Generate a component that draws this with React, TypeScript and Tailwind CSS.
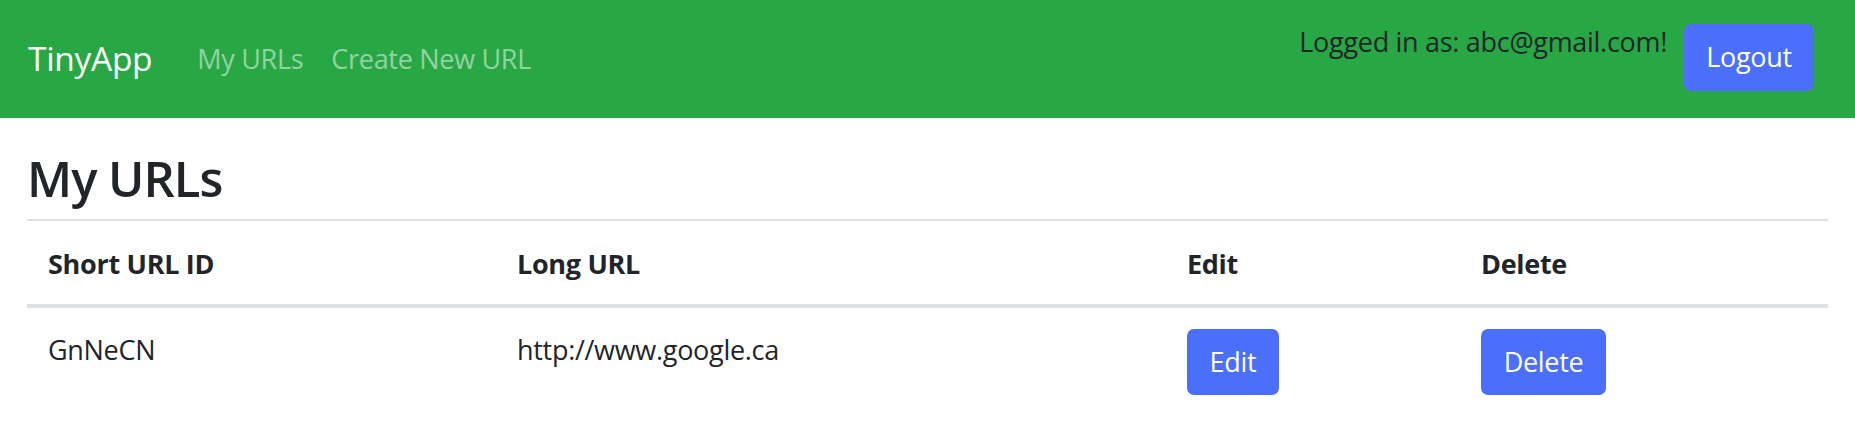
import React from "react";

const urls = [{ id: "GnNeCN", longURL: "http://www.google.ca" }];

const Navbar = () => (
  <nav className="flex h-[118px] items-stretch justify-between bg-[#28a745] pl-[28px] pr-[41px]">
    <div className="flex items-center">
      <a href="#" className="mr-[31px] -mt-[2px] text-[33.5px] leading-[1.5] tracking-[-0.3px] text-white">
        TinyApp
      </a>
      <a href="#" className="px-[14px] text-[27px] leading-[1.5] text-white/50">
        My URLs
      </a>
      <a href="#" className="px-[14px] text-[27px] leading-[1.5] text-white/50">
        Create New URL
      </a>
    </div>
    <div className="flex items-start gap-[17px] pt-[24px]">
      <span className="-mt-[2px] text-[27px] leading-[1.5] text-[#212529]">
        Logged in as: abc@gmail.com!
      </span>
      <button className="h-[67px] w-[130px] rounded-[7px] bg-[#4a6ffb] text-[27px] leading-[1.5] text-white">
        Logout
      </button>
    </div>
  </nav>
);

export default function App() {
  return (
    <div className="min-h-screen bg-white font-['Open_Sans',sans-serif] tracking-[-0.3px] text-[#212529]">
      <Navbar />
      <main className="px-[27px]">
        <h2 className="mt-[31px] mb-[11px] text-[49px] leading-[1.2] font-semibold tracking-[-1px]">My URLs</h2>
        <table className="w-full table-fixed border-collapse text-left text-[27px] leading-[1.5]">
          <colgroup>
            <col className="w-[469px]" />
            <col className="w-[670px]" />
            <col className="w-[294px]" />
            <col className="w-[368px]" />
          </colgroup>
          <thead>
            <tr className="border-t-2 border-b-4 border-[#dee2e6]">
              <th className="px-[21px] pt-[23px] pb-[20px] font-bold">Short URL ID</th>
              <th className="px-[21px] pt-[23px] pb-[20px] font-bold">Long URL</th>
              <th className="px-[21px] pt-[23px] pb-[20px] font-bold">Edit</th>
              <th className="px-[21px] pt-[23px] pb-[20px] font-bold">Delete</th>
            </tr>
          </thead>
          <tbody>
            {urls.map((url) => (
              <tr key={url.id}>
                <td className="px-[21px] pt-[22px] pb-[21px] align-top">{url.id}</td>
                <td className="px-[21px] pt-[22px] pb-[21px] align-top">{url.longURL}</td>
                <td className="p-[21px] align-top">
                  <button className="h-[66px] w-[92px] rounded-[7px] bg-[#4a6ffb] text-white">Edit</button>
                </td>
                <td className="p-[21px] align-top">
                  <button className="h-[66px] w-[125px] rounded-[7px] bg-[#4a6ffb] text-white">Delete</button>
                </td>
              </tr>
            ))}
          </tbody>
        </table>
      </main>
    </div>
  );
}
